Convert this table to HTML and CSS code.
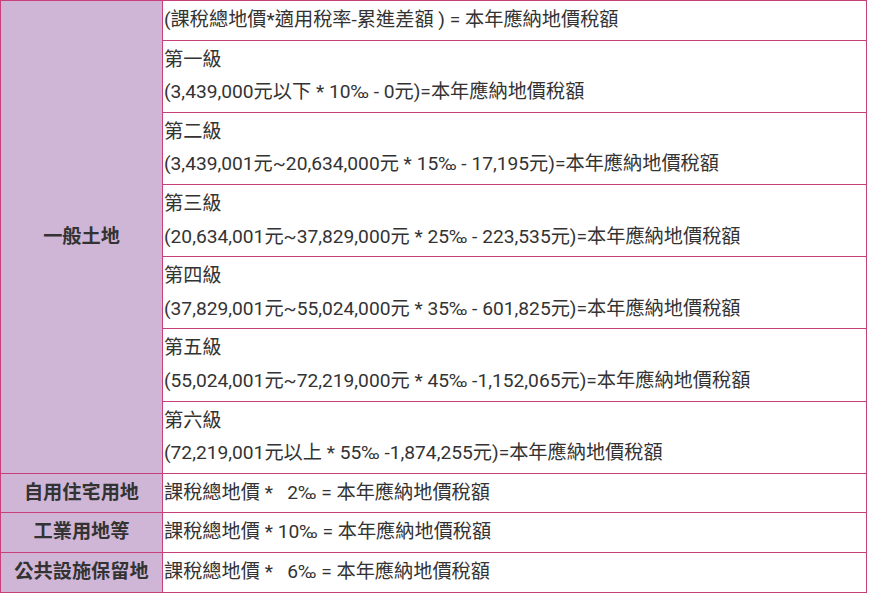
FILE: index.html
```html
<!DOCTYPE html>
<html lang="zh-Hant">
<head>
<meta charset="utf-8">
<title>地價稅計算</title>
<link rel="stylesheet" href="styles.css">
</head>
<body>
<table class="tax">
  <tr>
    <th class="cat" rowspan="7">一般土地</th>
    <td>(課稅總地價*適用稅率-累進差額 ) = 本年應納地價稅額</td>
  </tr>
  <tr><td>第一級<br>(3,439,000元以下 * 10‰ - 0元)=本年應納地價稅額</td></tr>
  <tr><td>第二級<br>(3,439,001元~20,634,000元 * 15‰ - 17,195元)=本年應納地價稅額</td></tr>
  <tr><td>第三級<br>(20,634,001元~37,829,000元 * 25‰ - 223,535元)=本年應納地價稅額</td></tr>
  <tr><td>第四級<br>(37,829,001元~55,024,000元 * 35‰ - 601,825元)=本年應納地價稅額</td></tr>
  <tr><td>第五級<br>(55,024,001元~72,219,000元 * 45‰ -1,152,065元)=本年應納地價稅額</td></tr>
  <tr><td>第六級<br>(72,219,001元以上 * 55‰ -1,874,255元)=本年應納地價稅額</td></tr>
  <tr>
    <th class="cat">自用住宅用地</th>
    <td>課稅總地價 *&nbsp; &nbsp;2‰ = 本年應納地價稅額</td>
  </tr>
  <tr>
    <th class="cat">工業用地等</th>
    <td>課稅總地價 * 10‰ = 本年應納地價稅額</td>
  </tr>
  <tr>
    <th class="cat">公共設施保留地</th>
    <td>課稅總地價 *&nbsp; &nbsp;6‰ = 本年應納地價稅額</td>
  </tr>
</table>
</body>
</html>
```

FILE: styles.css
```css
html, body {
  margin: 0;
  padding: 0;
  background: #ffffff;
}

.tax {
  width: 867px;
  border-collapse: collapse;
  font-family: Roboto, "Noto Sans CJK TC", sans-serif;
  font-size: 19.2px;
  line-height: 32.6px;
  color: #333333;
}

.tax th,
.tax td {
  border: 1px solid #c8407a;
  padding: 3px 1px;
  text-align: left;
  vertical-align: middle;
}

.tax .cat {
  width: 159px;
  background: #cfb6d7;
  font-weight: bold;
  text-align: center;
  color: #333333;
}
```
